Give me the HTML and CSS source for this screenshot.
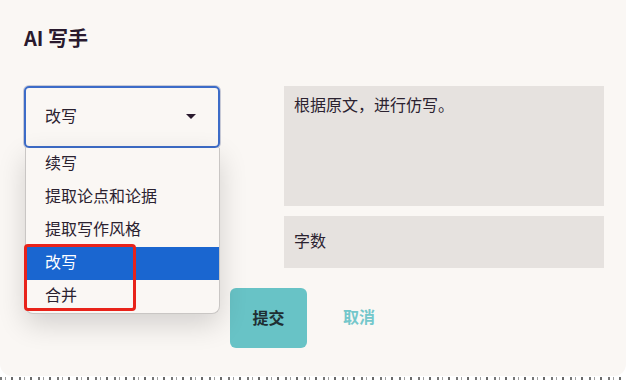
FILE: index.html
```html
<!DOCTYPE html>
<html lang="zh-CN">
<head>
    <meta charset="UTF-8">
    <meta name="viewport" content="width=device-width, initial-scale=1.0">
    <title>AI 写手</title>
    <link rel="stylesheet" href="styles.css">
</head>
<body>
    <div class="dialog">
        <h2 class="title">AI 写手</h2>
        <div class="form">
            <div class="left">
                <div class="select">
                    <span>改写</span>
                    <span class="caret"></span>
                </div>
                <ul class="menu">
                    <li>续写</li>
                    <li>提取论点和论据</li>
                    <li>提取写作风格</li>
                    <li class="active">改写</li>
                    <li>合并</li>
                    <span class="mark"></span>
                </ul>
            </div>
            <div class="right">
                <div class="textarea">根据原文，进行仿写。</div>
                <div class="input">字数</div>
            </div>
        </div>
        <div class="actions">
            <button class="submit">提交</button>
            <button class="cancel">取消</button>
        </div>
    </div>
    <div class="behind"></div>
</body>
</html>
```

FILE: styles.css
```css
body {
    margin: 0;
    background: #fff;
    font-family: "Noto Sans CJK SC", "Noto Sans", sans-serif;
    color: #2b2230;
    height: 380px;
    overflow: hidden;
}
.dialog {
    height: 376px;
    box-sizing: border-box;
    background: #faf7f4;
    border-radius: 0 0 12px 12px;
    padding: 23px 22px 0 24px;
}
.title {
    margin: 0;
    font-size: 20px;
    line-height: 30px;
    font-weight: 700;
    color: #2a1a2e;
}
.form {
    display: grid;
    grid-template-columns: 196px 320px;
    column-gap: 64px;
    margin-top: 33px;
}
.left {
    position: relative;
}
.select {
    height: 62px;
    box-sizing: border-box;
    border: 2px solid #3d6cc8;
    border-radius: 5px;
    box-shadow: 0 0 0 1px #c8cad6;
    display: flex;
    align-items: center;
    justify-content: space-between;
    padding: 0 22px 5px 19px;
    font-size: 16px;
}
.caret {
    width: 0;
    height: 0;
    margin-top: 4px;
    border-left: 5px solid transparent;
    border-right: 5px solid transparent;
    border-top: 5px solid #2a1a2e;
}
.menu {
    position: absolute;
    top: 62px;
    left: 1px;
    width: 193px;
    margin: 0;
    padding: 0;
    list-style: none;
    background: #faf7f4;
    border: 1px solid #c9c6c4;
    border-top: none;
    border-radius: 0 0 8px 8px;
    box-shadow: 0 10px 28px rgba(0, 0, 0, 0.16);
    font-size: 16px;
}
.menu li {
    height: 33px;
    line-height: 29px;
    padding-left: 19px;
}
.menu li.active {
    background: #1a66d0;
    color: #fff;
}
.mark {
    position: absolute;
    left: -2px;
    top: 96px;
    width: 112px;
    height: 67px;
    box-sizing: border-box;
    border: 3px solid #e8231a;
    border-radius: 4px;
}
.right {
    display: flex;
    flex-direction: column;
    gap: 10px;
}
.textarea, .input {
    background: #e6e2df;
    padding: 5px 10px;
    font-size: 16px;
    line-height: 26px;
    box-sizing: border-box;
}
.textarea {
    height: 120px;
}
.input {
    height: 52px;
    display: flex;
    align-items: center;
    padding-bottom: 10px;
}
.actions {
    display: flex;
    align-items: center;
    gap: 16px;
    margin: 20px 0 0 206px;
}
.actions button {
    font-family: inherit;
    font-size: 16px;
    font-weight: 700;
    border: none;
    cursor: pointer;
    padding-bottom: 4px;
}
.submit {
    width: 77px;
    height: 60px;
    border-radius: 6px;
    background: #68c3c6;
    color: #1f2f33;
}
.cancel {
    background: none;
    color: #74c7cb;
    padding: 0 20px;
}
.behind {
    height: 4px;
    margin-top: 1px;
    background: repeating-linear-gradient(90deg, #555 0 2px, #fff 2px 5px, #888 5px 6px, #fff 6px 11px, #444 11px 13px, #fff 13px 19px);
    opacity: 0.8;
}
```
